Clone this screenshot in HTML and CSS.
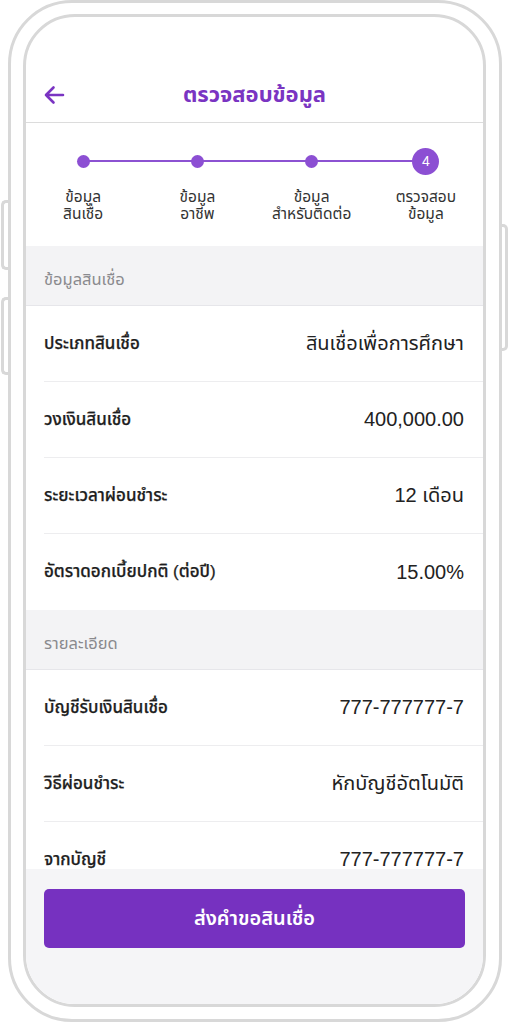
FILE: index.html
```html
<!DOCTYPE html>
<html lang="th">
<head>
<meta charset="utf-8">
<title>ตรวจสอบข้อมูล</title>
<link rel="stylesheet" href="styles.css">
</head>
<body>
<div class="device">
  <div class="side-btn side-left side-1"></div>
  <div class="side-btn side-left side-2"></div>
  <div class="side-btn side-right side-3"></div>
  <div class="phone">
    <div class="screen">
      <header class="topbar">
        <div class="topbar-row">
          <svg class="back" width="22" height="22" viewBox="0 0 22 22"><path d="M20 11H3M10.5 3.5L3 11l7.5 7.5" fill="none" stroke="#7a34c2" stroke-width="2.6" stroke-linecap="round" stroke-linejoin="round"/></svg>
          <h1 class="title">ตรวจสอบข้อมูล</h1>
        </div>
      </header>
      <div class="content">
        <div class="stepper">
          <div class="step done"><div class="marker"><span class="dot"></span></div><div class="step-label">ข้อมูล<br>สินเชื่อ</div></div>
          <div class="step done"><div class="marker"><span class="dot"></span></div><div class="step-label">ข้อมูล<br>อาชีพ</div></div>
          <div class="step done"><div class="marker"><span class="dot"></span></div><div class="step-label">ข้อมูล<br>สำหรับติดต่อ</div></div>
          <div class="step current"><div class="marker"><span class="num">4</span></div><div class="step-label">ตรวจสอบ<br>ข้อมูล</div></div>
        </div>
        <div class="section-head">ข้อมูลสินเชื่อ</div>
        <div class="row"><span class="label">ประเภทสินเชื่อ</span><span class="value">สินเชื่อเพื่อการศึกษา</span></div>
        <div class="row"><span class="label">วงเงินสินเชื่อ</span><span class="value">400,000.00</span></div>
        <div class="row"><span class="label">ระยะเวลาผ่อนชำระ</span><span class="value">12 เดือน</span></div>
        <div class="row last"><span class="label">อัตราดอกเบี้ยปกติ (ต่อปี)</span><span class="value">15.00%</span></div>
        <div class="section-head">รายละเอียด</div>
        <div class="row"><span class="label">บัญชีรับเงินสินเชื่อ</span><span class="value">777-777777-7</span></div>
        <div class="row"><span class="label">วิธีผ่อนชำระ</span><span class="value">หักบัญชีอัตโนมัติ</span></div>
        <div class="row"><span class="label">จากบัญชี</span><span class="value">777-777777-7</span></div>
      </div>
      <div class="bottom">
        <button class="submit">ส่งคำขอสินเชื่อ</button>
      </div>
    </div>
  </div>
</div>
</body>
</html>
```

FILE: styles.css
```css
* { box-sizing: border-box; }
html, body { margin: 0; padding: 0; background: #fff; }
body {
  font-family: "Liberation Sans", "Noto Sans Thai", "Noto Sans", sans-serif;
  color: #222;
}
.device {
  position: relative;
  width: 510px;
  height: 1024px;
}
.side-btn {
  position: absolute;
  border: 3px solid #d8d8d8;
  background: #fff;
}
.side-left {
  left: 1px;
  width: 12px;
  border-right: none;
  border-radius: 5px 0 0 5px;
}
.side-right {
  left: 497px;
  width: 11px;
  border-left: none;
  border-radius: 0 5px 5px 0;
}
.side-1 { top: 200px; height: 70px; }
.side-2 { top: 297px; height: 78px; }
.side-3 { top: 224px; height: 127px; }
.phone {
  position: relative;
  margin-left: 8px;
  width: 494px;
  height: 1022px;
  border: 3px solid #d8d8d8;
  border-radius: 64px;
  padding: 11px 13px 12px 12px;
  background: #fff;
}
.screen {
  width: 463px;
  height: 993px;
  border: 3px solid #d8d8d8;
  border-radius: 52px;
  overflow: hidden;
  display: flex;
  flex-direction: column;
  background: #fff;
}
.topbar {
  height: 106px;
  flex: none;
  border-bottom: 1px solid #dcdcdc;
  display: flex;
  align-items: flex-end;
  padding-bottom: 5px;
}
.topbar-row {
  position: relative;
  width: 100%;
  height: 44px;
  display: flex;
  align-items: center;
  justify-content: center;
}
.back {
  position: absolute;
  left: 17px;
  top: 11px;
}
.title {
  margin: 0;
  font-size: 22px;
  font-weight: 700;
  color: #7a34c2;
}
.content {
  flex: 1;
  overflow: hidden;
}
.stepper {
  height: 123px;
  display: grid;
  grid-template-columns: repeat(4, 1fr);
  padding-top: 25px;
}
.step {
  position: relative;
  display: flex;
  flex-direction: column;
  align-items: center;
}
.marker {
  position: relative;
  width: 100%;
  height: 26px;
  display: flex;
  align-items: center;
  justify-content: center;
}
.step:not(:last-child) .marker::after {
  content: "";
  position: absolute;
  left: 50%;
  width: 100%;
  top: 12px;
  height: 2px;
  background: #8c52d2;
}
.dot {
  position: relative;
  z-index: 1;
  width: 13px;
  height: 13px;
  border-radius: 50%;
  background: #8c4fd3;
}
.num {
  position: relative;
  z-index: 1;
  width: 27px;
  height: 27px;
  border-radius: 50%;
  background: #8c4fd3;
  color: #fff;
  font-size: 14px;
  display: flex;
  align-items: center;
  justify-content: center;
}
.step-label {
  margin-top: 14px;
  font-size: 15.5px;
  line-height: 17px;
  text-align: center;
  color: #333;
}
.section-head {
  height: 60px;
  background: #f3f3f5;
  border-bottom: 1px solid #e6e6ea;
  padding-left: 18px;
  padding-top: 8px;
  display: flex;
  align-items: center;
  font-size: 16.5px;
  color: #8a8a8e;
}
.row {
  height: 76px;
  margin-left: 18px;
  padding-right: 19px;
  border-bottom: 1px solid #ededef;
  display: flex;
  align-items: center;
  justify-content: space-between;
}
.row.last { border-bottom: none; }
.label {
  font-size: 17px;
  font-weight: 500;
  color: #1e1e1e;
  -webkit-text-stroke: 0.25px #1e1e1e;
}
.value {
  font-size: 20px;
  color: #222;
}
.value:not(.num-v) { letter-spacing: 0; }
.bottom {
  height: 135px;
  flex: none;
  background: #f5f5f7;
  padding: 20px 18px 0 18px;
}
.submit {
  display: block;
  width: 100%;
  height: 59px;
  border: none;
  border-radius: 5px;
  background: #7631c0;
  color: #fff;
  font-family: inherit;
  font-size: 20px;
  font-weight: 600;
}
```
